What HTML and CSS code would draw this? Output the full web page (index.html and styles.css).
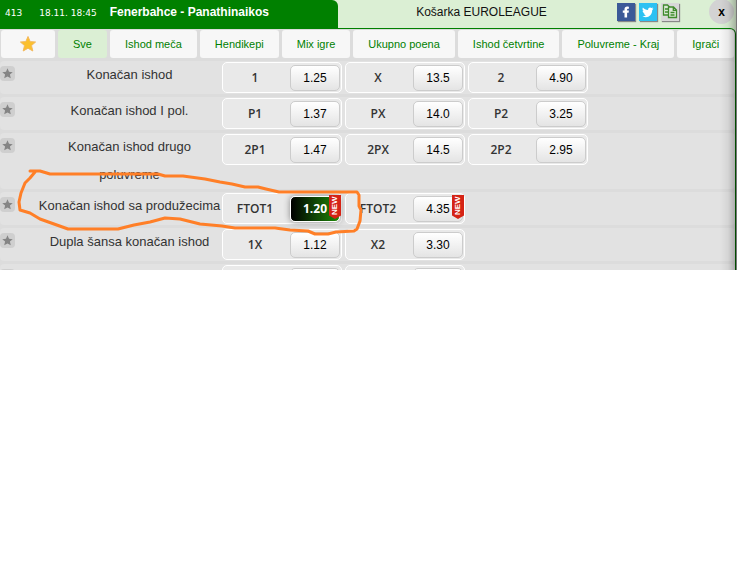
FILE: index.html
```html
<!DOCTYPE html>
<html lang="sr">
<head>
    <meta charset="UTF-8">
    <meta name="viewport" content="width=device-width, initial-scale=1.0">
    <title>Fenerbahce - Panathinaikos</title>
    <link rel="stylesheet" href="styles.css">
</head>
<body>
    <svg class="sprites" aria-hidden="true">
        <symbol id="star" viewBox="0 0 16 16">
            <path d="M8 0.5 L10.2 5.6 L15.6 6 L11.5 9.6 L12.8 15 L8 12.2 L3.2 15 L4.5 9.6 L0.4 6 L5.8 5.6 Z"/>
        </symbol>
    </svg>
    <div class="panel">
        <header class="header">
            <div class="match">
                <span class="code">413</span>
                <span class="date">18.11. 18:45</span>
                <strong class="teams">Fenerbahce - Panathinaikos</strong>
            </div>
            <div class="league">Košarka EUROLEAGUE</div>
            <div class="share">
                <a class="social facebook" href="#" aria-label="Facebook">
                    <svg viewBox="0 0 18 18"><path d="M7.5 14.5 V9.8 H5.8 V7.6 H7.5 V6.2 C7.5 4.4 8.6 3.6 10.2 3.6 L11.9 3.7 V5.8 H10.9 C10.3 5.8 10.1 6.1 10.1 6.6 V7.6 H11.9 L11.6 9.8 H10.1 V14.5 Z" fill="#fff"/></svg>
                </a>
                <a class="social twitter" href="#" aria-label="Twitter">
                    <svg viewBox="0 0 18 18"><path d="M14.5 5.4 L13.2 5.9 L14.1 4.6 L12.6 5.1 C11 3.6 8.8 4.9 9.1 7 C6.8 6.9 5.1 5.9 3.9 4.5 C3.2 5.8 3.5 7.2 4.7 8.1 L3.6 7.8 C3.6 9.2 4.6 10.1 5.8 10.5 L4.6 10.6 C5 11.5 5.9 12.1 7 12.2 C5.9 13 4.7 13.3 3.3 13.2 C8 15.8 13.2 13 13.2 7.3 Z" fill="#fff"/></svg>
                </a>
                <a class="social copy" href="#" aria-label="Kopiraj">
                    <svg viewBox="0 0 18 18" fill="#dbe9d5" stroke="#3f8a2c" stroke-width="1.3">
                        <path d="M2.5 2 H6.5 L9 4.5 V12 H2.5 Z M4 6 H7 M4 9 H7"/>
                        <path d="M7.5 4 H12.5 L15.5 7 V14.5 H7.5 Z M12.3 4 V7.3 H15.5 M9.5 9.5 H13.5 M9.5 12 H13.5"/>
                    </svg>
                </a>
            </div>
            <button class="close" type="button">x</button>
        </header>

        <div class="content">
            <nav class="tabs">
                <button class="tab favourites" type="button" aria-label="Favoriti"><svg><use href="#star"/></svg></button>
                <button class="tab active" type="button">Sve</button>
                <button class="tab" type="button">Ishod meča</button>
                <button class="tab" type="button">Hendikepi</button>
                <button class="tab" type="button">Mix igre</button>
                <button class="tab" type="button">Ukupno poena</button>
                <button class="tab" type="button">Ishod četvrtine</button>
                <button class="tab" type="button">Poluvreme - Kraj</button>
                <button class="tab" type="button">Igrači</button>
            </nav>

            <div class="row">
                <button class="fav" type="button" aria-label="Dodaj"><svg><use href="#star"/></svg></button>
                <div class="name">Konačan ishod</div>
                <div class="odds">
                    <div class="odd"><span class="tip">1</span><button class="price" type="button">1.25</button></div>
                    <div class="odd"><span class="tip">X</span><button class="price" type="button">13.5</button></div>
                    <div class="odd"><span class="tip">2</span><button class="price" type="button">4.90</button></div>
                </div>
            </div>
            <div class="row">
                <button class="fav" type="button" aria-label="Dodaj"><svg><use href="#star"/></svg></button>
                <div class="name">Konačan ishod I pol.</div>
                <div class="odds">
                    <div class="odd"><span class="tip">P1</span><button class="price" type="button">1.37</button></div>
                    <div class="odd"><span class="tip">PX</span><button class="price" type="button">14.0</button></div>
                    <div class="odd"><span class="tip">P2</span><button class="price" type="button">3.25</button></div>
                </div>
            </div>
            <div class="row">
                <button class="fav" type="button" aria-label="Dodaj"><svg><use href="#star"/></svg></button>
                <div class="name">Konačan ishod drugo<br>poluvreme</div>
                <div class="odds">
                    <div class="odd"><span class="tip">2P1</span><button class="price" type="button">1.47</button></div>
                    <div class="odd"><span class="tip">2PX</span><button class="price" type="button">14.5</button></div>
                    <div class="odd"><span class="tip">2P2</span><button class="price" type="button">2.95</button></div>
                </div>
            </div>
            <div class="row">
                <button class="fav" type="button" aria-label="Dodaj"><svg><use href="#star"/></svg></button>
                <div class="name">Konačan ishod sa produžecima</div>
                <div class="odds">
                    <div class="odd"><span class="tip">FTOT1</span><button class="price selected" type="button">1.20</button><span class="new">NEW</span></div>
                    <div class="odd"><span class="tip">FTOT2</span><button class="price" type="button">4.35</button><span class="new">NEW</span></div>
                </div>
            </div>
            <div class="row">
                <button class="fav" type="button" aria-label="Dodaj"><svg><use href="#star"/></svg></button>
                <div class="name">Dupla šansa konačan ishod</div>
                <div class="odds">
                    <div class="odd"><span class="tip">1X</span><button class="price" type="button">1.12</button></div>
                    <div class="odd"><span class="tip">X2</span><button class="price" type="button">3.30</button></div>
                </div>
            </div>
            <div class="row">
                <button class="fav" type="button" aria-label="Dodaj"><svg><use href="#star"/></svg></button>
                <div class="name"></div>
                <div class="odds">
                    <div class="odd"><span class="tip"></span><button class="price" type="button"></button></div>
                    <div class="odd"><span class="tip"></span><button class="price" type="button"></button></div>
                </div>
            </div>
        </div>

        <!-- hand drawn ring round the new bet -->
        <svg class="marker" width="380" height="250" viewBox="0 0 380 250" aria-hidden="true">
            <path d="M30 171 L40 171 L50 174 L158 174 L165 176 L183 176 L205 179 L220 182 L232 184 L245 187 L258 187 L266 189 L279 192 L357 192 L359 195 L359 206 L361 210 L360 221 L357 229 L354 231 L336 232 L328 234 L315 234 L308 231 L290 230 L275 228 L235 228 L222 226 L200 224 L180 219 L165 218 L150 222 L134 225 L118 229 L68 229 L40 219 L30 213 L20 210 L19 202 L21 193 L25 183 L30 178 L35 172"/>
        </svg>
    </div>
</body>
</html>
```
FILE: styles.css
```css
* {
    box-sizing: border-box;
}

body {
    margin: 0;
    background-color: #fff;
    font-family: "Liberation Sans", Arial, sans-serif;
    font-size: 12px;
    color: #333;
}

button {
    margin: 0;
    padding: 0;
    border: none;
    font-family: inherit;
    font-size: 12px;
    cursor: pointer;
}

svg {
    display: block;
}

.sprites {
    display: none;
}

.panel {
    position: relative;
    max-height: 270px;
    overflow: hidden;
    background-color: #dbefd4;
    border-right: 1px solid #777;
}

.panel::after {
    content: "";
    position: absolute;
    top: 0;
    right: 0;
    bottom: 0;
    width: 16px;
    background: linear-gradient(to right, rgba(0, 0, 0, 0), rgba(0, 0, 0, 0.06) 50%, rgba(0, 0, 0, 0.25));
    pointer-events: none;
}

/* header */

.header {
    display: flex;
    height: 28px;
}

.match {
    display: flex;
    align-items: center;
    width: 338px;
    padding: 0 5px 4px;
    background-color: #008000;
    border-top-right-radius: 6px;
    color: #fff;
    white-space: nowrap;
}

.code,
.date {
    padding-top: 2px;
    font-family: "DejaVu Sans", Verdana, sans-serif;
    font-size: 9px;
}

.date {
    margin-left: 17px;
}

.teams {
    margin-left: 13px;
}

.league {
    flex: 1;
    padding-left: 8px;
    line-height: 24px;
    text-align: center;
    color: #111;
}

.share {
    display: flex;
    gap: 4px;
    padding-top: 3px;
}

.social {
    width: 18px;
    height: 18px;
    box-shadow: 1px 1px 1px #888;
}

.facebook {
    background-color: #3b5998;
}

.twitter {
    background-color: #2cc1f2;
}

.copy {
    background-color: #d8d8d8;
}

.close {
    width: 25px;
    height: 25px;
    margin: -1px 2px 0 30px;
    border-radius: 50%;
    background-color: #d3d3d3;
    font-weight: bold;
    color: #000;
}

/* tabs */

.content {
    border-top: 1px solid #008000;
    border-right: 1px solid #006400;
    border-top-right-radius: 6px;
    background-color: #dcdcdc;
    overflow: hidden;
}

.tabs {
    display: flex;
    gap: 3px;
    padding: 1px 0 3px 1px;
}

.tab {
    flex: none;
    height: 28px;
    padding: 0 15px;
    border-radius: 3px;
    background-color: #f7f7f7;
    font-size: 11px;
    color: #008000;
    white-space: nowrap;
}

.tab.active {
    background-color: #dbefd4;
}

.favourites {
    padding: 0 19px;
}

.favourites svg {
    width: 16px;
    height: 16px;
    fill: #fbc02d;
    stroke: #f3b95f;
    stroke-width: 1px;
}

/* bets */

.row {
    display: flex;
    align-items: flex-start;
    min-height: 33px;
    margin-bottom: 3px;
    border-radius: 4px;
    background-color: #e2e2e2;
}

.fav {
    width: 15px;
    height: 15px;
    margin-top: 5px;
    padding: 2px;
    border-radius: 4px;
    background-color: #cfcfcf;
}

.fav svg {
    width: 11px;
    height: 11px;
    fill: #858585;
}

.name {
    width: 207px;
    padding-left: 22px;
    font-size: 13px;
    line-height: 28px;
    text-align: center;
    white-space: nowrap;
}

.odds {
    display: flex;
    gap: 3px;
    padding-top: 1px;
}

.odd {
    position: relative;
    display: flex;
    align-items: center;
    width: 120px;
    height: 31px;
    padding-right: 1px;
    border: 1px solid #fff;
    border-radius: 5px;
    background-color: #e9e9e9;
}

.tip {
    flex: 1;
    padding-right: 3px;
    font-family: "Open Sans", sans-serif;
    font-weight: 600;
    text-align: center;
}

.price {
    width: 50px;
    height: 26px;
    border: 1px solid #ccc;
    border-radius: 5px;
    background: linear-gradient(#fff, #e4e4e4);
    color: #000;
}

.price.selected {
    border-color: #fff;
    background: linear-gradient(to right, #000, #1f8a0a);
    box-shadow: 0 0 6px #888;
    font-family: "Open Sans", sans-serif;
    font-weight: bold;
    color: #fff;
}

.new {
    position: absolute;
    top: 1px;
    right: 0;
    width: 12px;
    height: 24px;
    padding-top: 2px;
    background-color: #d52315;
    clip-path: polygon(0 15%, 50% 0, 100% 15%, 100% 100%, 0 100%);
    font-size: 8px;
    font-weight: bold;
    line-height: 12px;
    text-align: center;
    color: #fff;
    writing-mode: vertical-rl;
    rotate: 180deg;
}

.marker {
    position: absolute;
    top: 0;
    left: 0;
    fill: none;
    stroke: #ff7f27;
    stroke-width: 3px;
    stroke-linejoin: round;
    stroke-linecap: round;
    pointer-events: none;
}
```
